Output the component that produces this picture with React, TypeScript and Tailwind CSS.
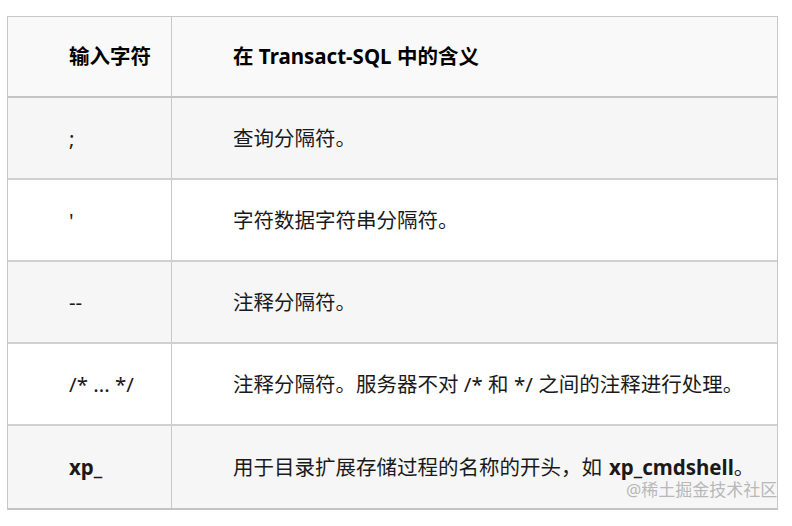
import React from "react";

const rows: { k: React.ReactNode; v: React.ReactNode; bg: string }[] = [
  { k: ";", v: "查询分隔符。", bg: "bg-[#f6f6f6]" },
  { k: "'", v: "字符数据字符串分隔符。", bg: "bg-white" },
  { k: "--", v: "注释分隔符。", bg: "bg-[#f6f6f6]" },
  { k: "/* ... */", v: "注释分隔符。服务器不对 /* 和 */ 之间的注释进行处理。", bg: "bg-white" },
  {
    k: <b className="font-bold">xp_</b>,
    v: (
      <>
        用于目录扩展存储过程的名称的开头，如<b className="font-bold ml-[7px]">xp_cmdshell</b>。
      </>
    ),
    bg: "bg-[#f6f6f6]",
  },
];

export default function App() {
  return (
    <div
      className="w-[792px] h-[526px] bg-white pt-4 pl-[7px] relative text-[#1a1a1a]"
      style={{ fontFamily: '"Noto Sans", "Noto Sans CJK SC", sans-serif' }}
    >
      <div className="w-[771px] border border-[#c8c8c8] border-b-2 border-b-[#c4c4c4]">
        <div className="flex h-[81px] bg-[#f9f9f9] border-b-2 border-[#c4c4c4] text-[20.5px] font-bold text-black">
          <div className="w-[164px] border-r border-[#c8c8c8] flex items-center pl-[61px]">输入字符</div>
          <div className="flex-1 flex items-center pl-[61px]">在 Transact-SQL 中的含义</div>
        </div>
        {rows.map((r, i) => (
          <div
            key={i}
            className={`flex h-[82px] text-[20.5px] ${r.bg} ${i < rows.length - 1 ? "border-b-2 border-[#d0d0d0]" : ""}`}
          >
            <div className="w-[164px] border-r border-[#c8c8c8] flex items-center pl-[61px]">{r.k}</div>
            <div className="flex-1 flex items-center pl-[61px] whitespace-pre">{r.v}</div>
          </div>
        ))}
      </div>
      <div className="absolute left-[626px] top-[481px] text-[17px] text-[#b8b8b8] leading-none">@稀土掘金技术社区</div>
    </div>
  );
}
